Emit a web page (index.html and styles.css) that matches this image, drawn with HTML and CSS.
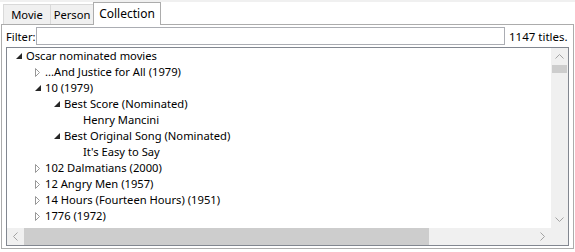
FILE: index.html
```html
<!DOCTYPE html>
<html>
<head>
    <title>Collection</title>
    <link rel="stylesheet" href="styles.css">
</head>
<body>
    <div class="topbar"></div>
    <div class="tabs">
        <div class="tab tab-movie">Movie</div>
        <div class="tab tab-person">Person</div>
        <div class="tab selected">Collection</div>
    </div>
    <div class="panel">
        <div class="filter-row">
            <label>Filter:</label>
            <div class="textbox"></div>
            <span class="count">1147 titles.</span>
        </div>
        <div class="tree">
            <div class="tree-items">
                <div class="node lvl0"><span class="arrow open"><svg width="6" height="6" viewBox="0 0 6 6"><polygon points="6,0 6,6 0,6" /></svg></span>Oscar nominated movies</div>
                <div class="node lvl1"><span class="arrow closed"><svg width="5" height="9" viewBox="0 0 5 9"><polygon points="0.5,0.5 4.5,4.5 0.5,8.5" /></svg></span>...And Justice for All (1979)</div>
                <div class="node lvl1"><span class="arrow open"><svg width="6" height="6" viewBox="0 0 6 6"><polygon points="6,0 6,6 0,6" /></svg></span>10 (1979)</div>
                <div class="node lvl2"><span class="arrow open"><svg width="6" height="6" viewBox="0 0 6 6"><polygon points="6,0 6,6 0,6" /></svg></span>Best Score (Nominated)</div>
                <div class="node lvl3"><span class="arrow"></span>Henry Mancini</div>
                <div class="node lvl2"><span class="arrow open"><svg width="6" height="6" viewBox="0 0 6 6"><polygon points="6,0 6,6 0,6" /></svg></span>Best Original Song (Nominated)</div>
                <div class="node lvl3"><span class="arrow"></span>It's Easy to Say</div>
                <div class="node lvl1"><span class="arrow closed"><svg width="5" height="9" viewBox="0 0 5 9"><polygon points="0.5,0.5 4.5,4.5 0.5,8.5" /></svg></span>102 Dalmatians (2000)</div>
                <div class="node lvl1"><span class="arrow closed"><svg width="5" height="9" viewBox="0 0 5 9"><polygon points="0.5,0.5 4.5,4.5 0.5,8.5" /></svg></span>12 Angry Men (1957)</div>
                <div class="node lvl1"><span class="arrow closed"><svg width="5" height="9" viewBox="0 0 5 9"><polygon points="0.5,0.5 4.5,4.5 0.5,8.5" /></svg></span>14 Hours (Fourteen Hours) (1951)</div>
                <div class="node lvl1"><span class="arrow closed"><svg width="5" height="9" viewBox="0 0 5 9"><polygon points="0.5,0.5 4.5,4.5 0.5,8.5" /></svg></span>1776 (1972)</div>
                <div class="node lvl1"><span class="arrow closed"><svg width="5" height="9" viewBox="0 0 5 9"><polygon points="0.5,0.5 4.5,4.5 0.5,8.5" /></svg></span>1941 (1979)</div>
            </div>
            <div class="vscroll">
                <div class="sb-btn"><svg width="9" height="5" viewBox="0 0 9 5"><polyline points="0.5,4.5 4.5,0.5 8.5,4.5" /></svg></div>
                <div class="vtrack"><div class="vthumb"></div></div>
                <div class="sb-btn"><svg width="9" height="5" viewBox="0 0 9 5"><polyline points="0.5,0.5 4.5,4.5 8.5,0.5" /></svg></div>
            </div>
            <div class="hscroll">
                <div class="sb-btn"><svg width="5" height="9" viewBox="0 0 5 9"><polyline points="4.5,0.5 0.5,4.5 4.5,8.5" /></svg></div>
                <div class="htrack"><div class="hthumb"></div></div>
                <div class="sb-btn"><svg width="5" height="9" viewBox="0 0 5 9"><polyline points="0.5,0.5 4.5,4.5 0.5,8.5" /></svg></div>
            </div>
            <div class="corner"></div>
        </div>
    </div>
</body>
</html>
```

FILE: styles.css
```css
body {
    margin: 0;
    background: #fff;
    font-family: "Noto Sans", sans-serif;
    font-size: 11.2px;
    color: #000;
    width: 575px;
    height: 252px;
    overflow: hidden;
}
.topbar {
    height: 2px;
    background: #f0f0f0;
}
.tabs {
    display: flex;
    align-items: flex-end;
    height: 22px;
    padding-left: 3px;
    position: relative;
    z-index: 1;
}
.tab {
    height: 20px;
    line-height: 19px;
    text-align: center;
    background: #f0f0f0;
    border: 1px solid #d9d9d9;
    border-bottom: none;
    margin-right: -1px;
    box-sizing: border-box;
}
.tab-movie {
    width: 48px;
}
.tab-person {
    width: 44px;
}
.tab.selected {
    width: 68px;
    background: #fff;
    border-color: #acacac;
    height: 23px;
    line-height: 21px;
    margin-bottom: -1px;
    font-size: 12px;
}
.panel {
    margin: 0 1px;
    height: 225px;
    border: 1px solid #acacac;
    box-sizing: border-box;
    padding: 2px 3px 2px 4px;
    display: flex;
    flex-direction: column;
    gap: 2px;
}
.filter-row {
    display: flex;
    align-items: center;
    height: 18px;
}
.filter-row label {
    width: 30px;
}
.textbox {
    flex: 1;
    height: 18px;
    border: 1px solid #abadb3;
    box-sizing: border-box;
}
.count {
    width: 65px;
    padding-left: 4px;
    box-sizing: border-box;
    white-space: nowrap;
    font-size: 11.5px;
}
.tree {
    flex: 1;
    border: 1px solid #828790;
    margin-right: 1px;
    display: grid;
    grid-template-columns: 1fr 17px;
    grid-template-rows: 1fr 17px;
    min-height: 0;
}
.tree-items {
    overflow: hidden;
}
.node {
    height: 16px;
    line-height: 16px;
    white-space: nowrap;
    display: flex;
    align-items: center;
}
.lvl0 { padding-left: 4px; }
.lvl1 { padding-left: 23px; }
.lvl2 { padding-left: 42px; }
.lvl3 { padding-left: 61px; }
.arrow {
    width: 15px;
    height: 16px;
    display: flex;
    align-items: center;
    justify-content: center;
    flex-shrink: 0;
}
.arrow.open polygon {
    fill: #262626;
}
.arrow.closed polygon {
    fill: none;
    stroke: #989898;
}
.vscroll {
    background: #f0f0f0;
    display: flex;
    flex-direction: column;
}
.hscroll {
    background: #f0f0f0;
    display: flex;
}
.sb-btn {
    width: 17px;
    height: 17px;
    display: flex;
    align-items: center;
    justify-content: center;
    flex-shrink: 0;
}
.sb-btn polyline {
    fill: none;
    stroke: #a3a3a3;
}
.vtrack {
    flex: 1;
}
.vthumb {
    height: 8px;
    margin: 0 1px;
    background: #cdcdcd;
}
.htrack {
    flex: 1;
}
.hthumb {
    width: 405px;
    height: 17px;
    background: #cdcdcd;
}
.corner {
    background: #f0f0f0;
}
```
